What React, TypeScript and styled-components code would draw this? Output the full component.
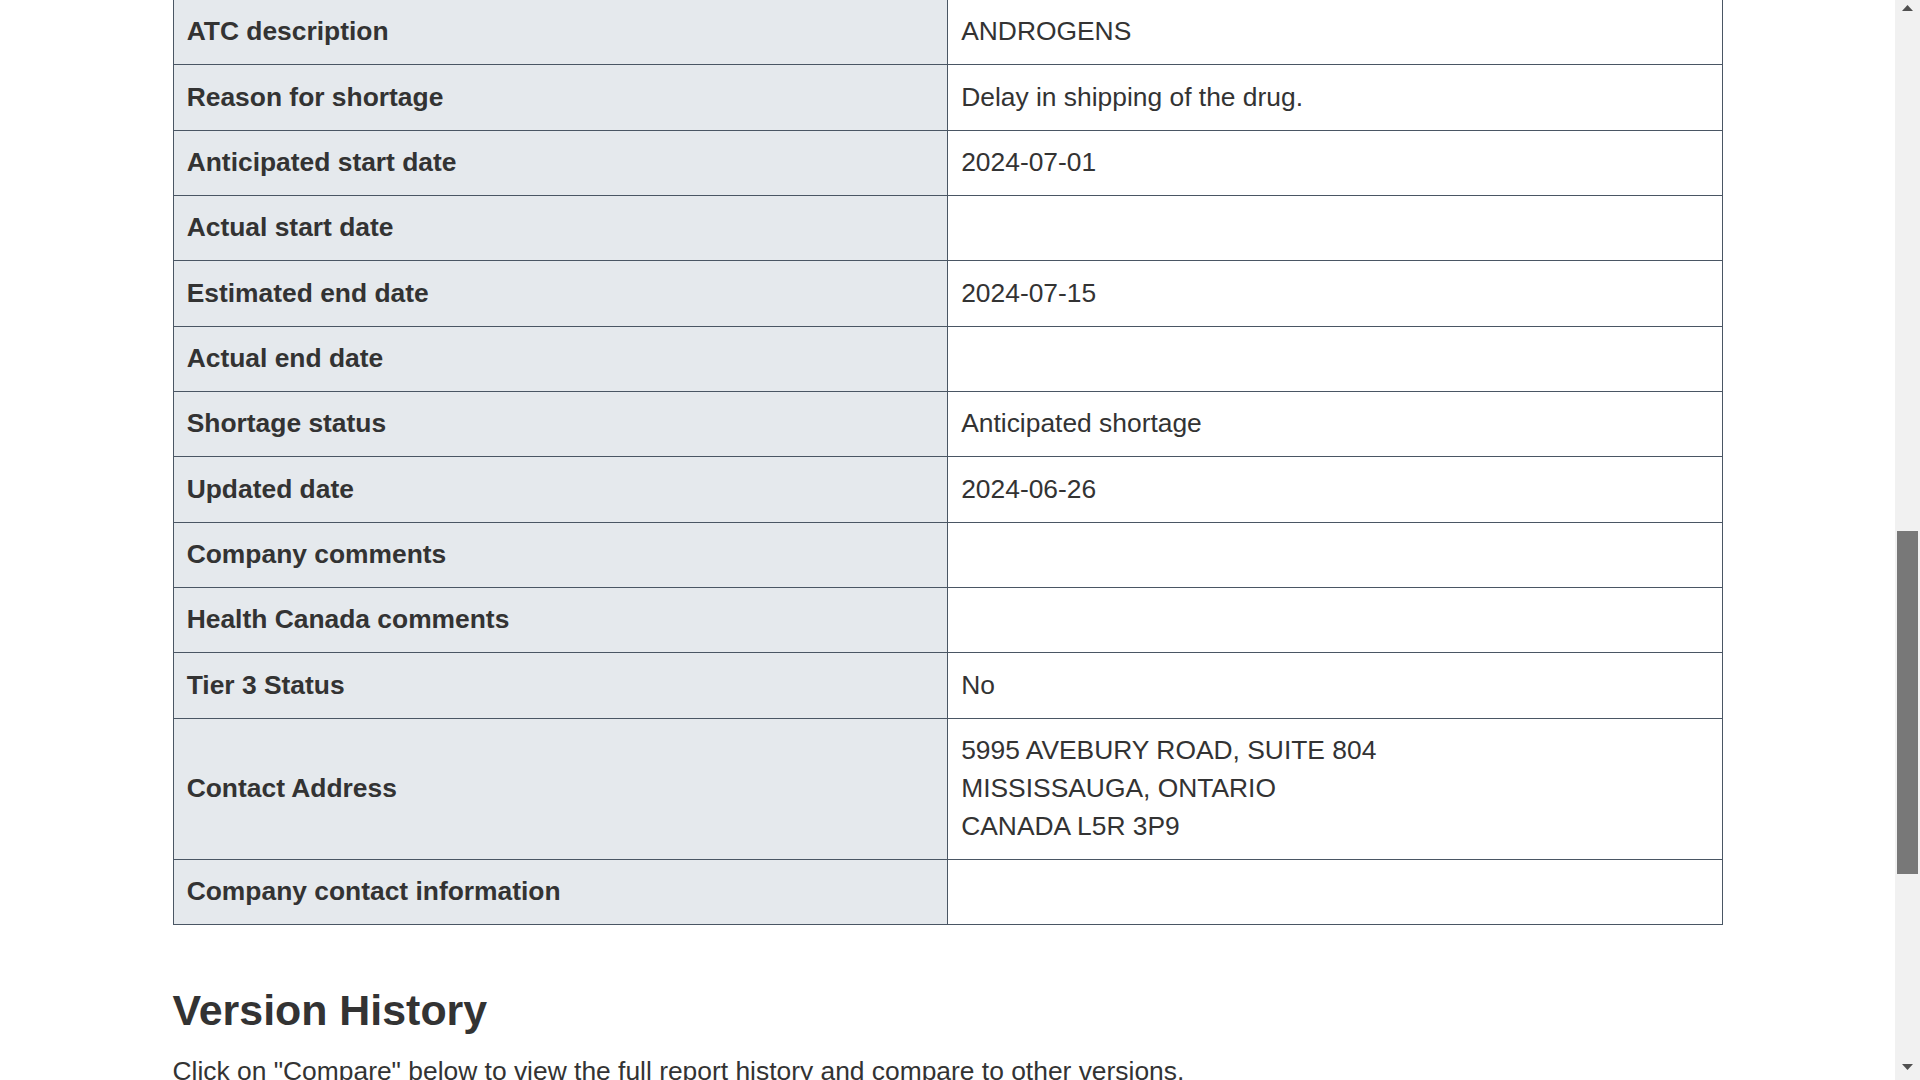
import React from "react";
import styled, { createGlobalStyle } from "styled-components";

const GlobalStyle = createGlobalStyle`
  html, body {
    margin: 0;
    padding: 0;
    height: 1080px;
    overflow: hidden;
    background: #ffffff;
  }
  body {
    font-family: "Liberation Sans", Arial, Helvetica, sans-serif;
    color: #333333;
  }
  #root {
    height: 1080px;
  }
`;

const Page = styled.div`
  display: flex;
  width: 1920px;
  height: 1080px;
  overflow: hidden;
`;

const Main = styled.main`
  flex: 1;
  min-width: 0;
  height: 1080px;
  overflow: hidden;
`;

const Container = styled.div`
  width: 1550px;
  margin: -0.9px auto 0;
`;

const DetailTable = styled.table`
  width: 100%;
  table-layout: fixed;
  border-collapse: collapse;
  border: 1px solid #4a5664;
  font-size: 26.4px;
  line-height: 37.95px;
  margin: 0;
`;

const Row = styled.tr``;

const Label = styled.th`
  width: 50%;
  text-align: left;
  vertical-align: middle;
  font-weight: 700;
  color: #333333;
  background: #e5e9ed;
  border: 1px solid #4a5664;
  padding: 13.2px 13.2px;
`;

const Value = styled.td`
  width: 50%;
  text-align: left;
  vertical-align: middle;
  font-weight: 400;
  color: #333333;
  background: #ffffff;
  border: 1px solid #4a5664;
  padding: 13.2px 13.2px;
`;

const AddressLine = styled.span`
  display: block;
`;

const Heading = styled.h2`
  font-size: 42.9px;
  line-height: 1.1;
  font-weight: 700;
  color: #333333;
  margin: 62px 0 18.2px;
`;

const Paragraph = styled.p`
  font-size: 26.4px;
  line-height: 37.95px;
  margin: 0;
  color: #333333;
`;

const ScrollBar = styled.div`
  width: 25px;
  height: 1080px;
  background: #f1f1f1;
  display: flex;
  flex-direction: column;
  align-items: center;
`;

const ArrowBox = styled.div<{ $dir: "up" | "down" }>`
  height: 17px;
  width: 100%;
  display: flex;
  align-items: ${(p) => (p.$dir === "up" ? "flex-start" : "flex-end")};
  justify-content: center;
  padding: ${(p) => (p.$dir === "up" ? "5px 0 0" : "0 0 10px")};
  box-sizing: border-box;
`;

const Track = styled.div`
  flex: 1;
  width: 100%;
  display: flex;
  flex-direction: column;
  align-items: center;
`;

const Thumb = styled.div`
  width: 21px;
  background: #787878;
`;

const Arrow: React.FC<{ dir: "up" | "down" }> = ({ dir }) => (
  <svg width="11" height="6" viewBox="0 0 11 6">
    {dir === "up" ? (
      <polygon points="0,6 5.5,0 11,6" fill="#505050" />
    ) : (
      <polygon points="0,0 5.5,6 11,0" fill="#505050" />
    )}
  </svg>
);

const rows: { label: string; value?: string | string[] }[] = [
  { label: "ATC description", value: "ANDROGENS" },
  { label: "Reason for shortage", value: "Delay in shipping of the drug." },
  { label: "Anticipated start date", value: "2024-07-01" },
  { label: "Actual start date" },
  { label: "Estimated end date", value: "2024-07-15" },
  { label: "Actual end date" },
  { label: "Shortage status", value: "Anticipated shortage" },
  { label: "Updated date", value: "2024-06-26" },
  { label: "Company comments" },
  { label: "Health Canada comments" },
  { label: "Tier 3 Status", value: "No" },
  {
    label: "Contact Address",
    value: ["5995 AVEBURY ROAD, SUITE 804", "MISSISSAUGA, ONTARIO", "CANADA L5R 3P9"],
  },
  { label: "Company contact information" },
];

export default function App() {
  const thumbTop = 531 - 17;
  const thumbHeight = 343;
  return (
    <>
      <GlobalStyle />
      <Page>
        <Main>
          <Container>
            <DetailTable>
              <tbody>
                {rows.map((r) => (
                  <Row key={r.label}>
                    <Label scope="row">{r.label}</Label>
                    <Value>
                      {Array.isArray(r.value)
                        ? r.value.map((l) => <AddressLine key={l}>{l}</AddressLine>)
                        : r.value ?? ""}
                    </Value>
                  </Row>
                ))}
              </tbody>
            </DetailTable>
            <Heading>Version History</Heading>
            <Paragraph>
              Click on "Compare" below to view the full report history and compare to other versions.
            </Paragraph>
          </Container>
        </Main>
        <ScrollBar>
          <ArrowBox $dir="up">
            <Arrow dir="up" />
          </ArrowBox>
          <Track>
            <Thumb style={{ marginTop: thumbTop, height: thumbHeight }} />
          </Track>
          <ArrowBox $dir="down">
            <Arrow dir="down" />
          </ArrowBox>
        </ScrollBar>
      </Page>
    </>
  );
}
